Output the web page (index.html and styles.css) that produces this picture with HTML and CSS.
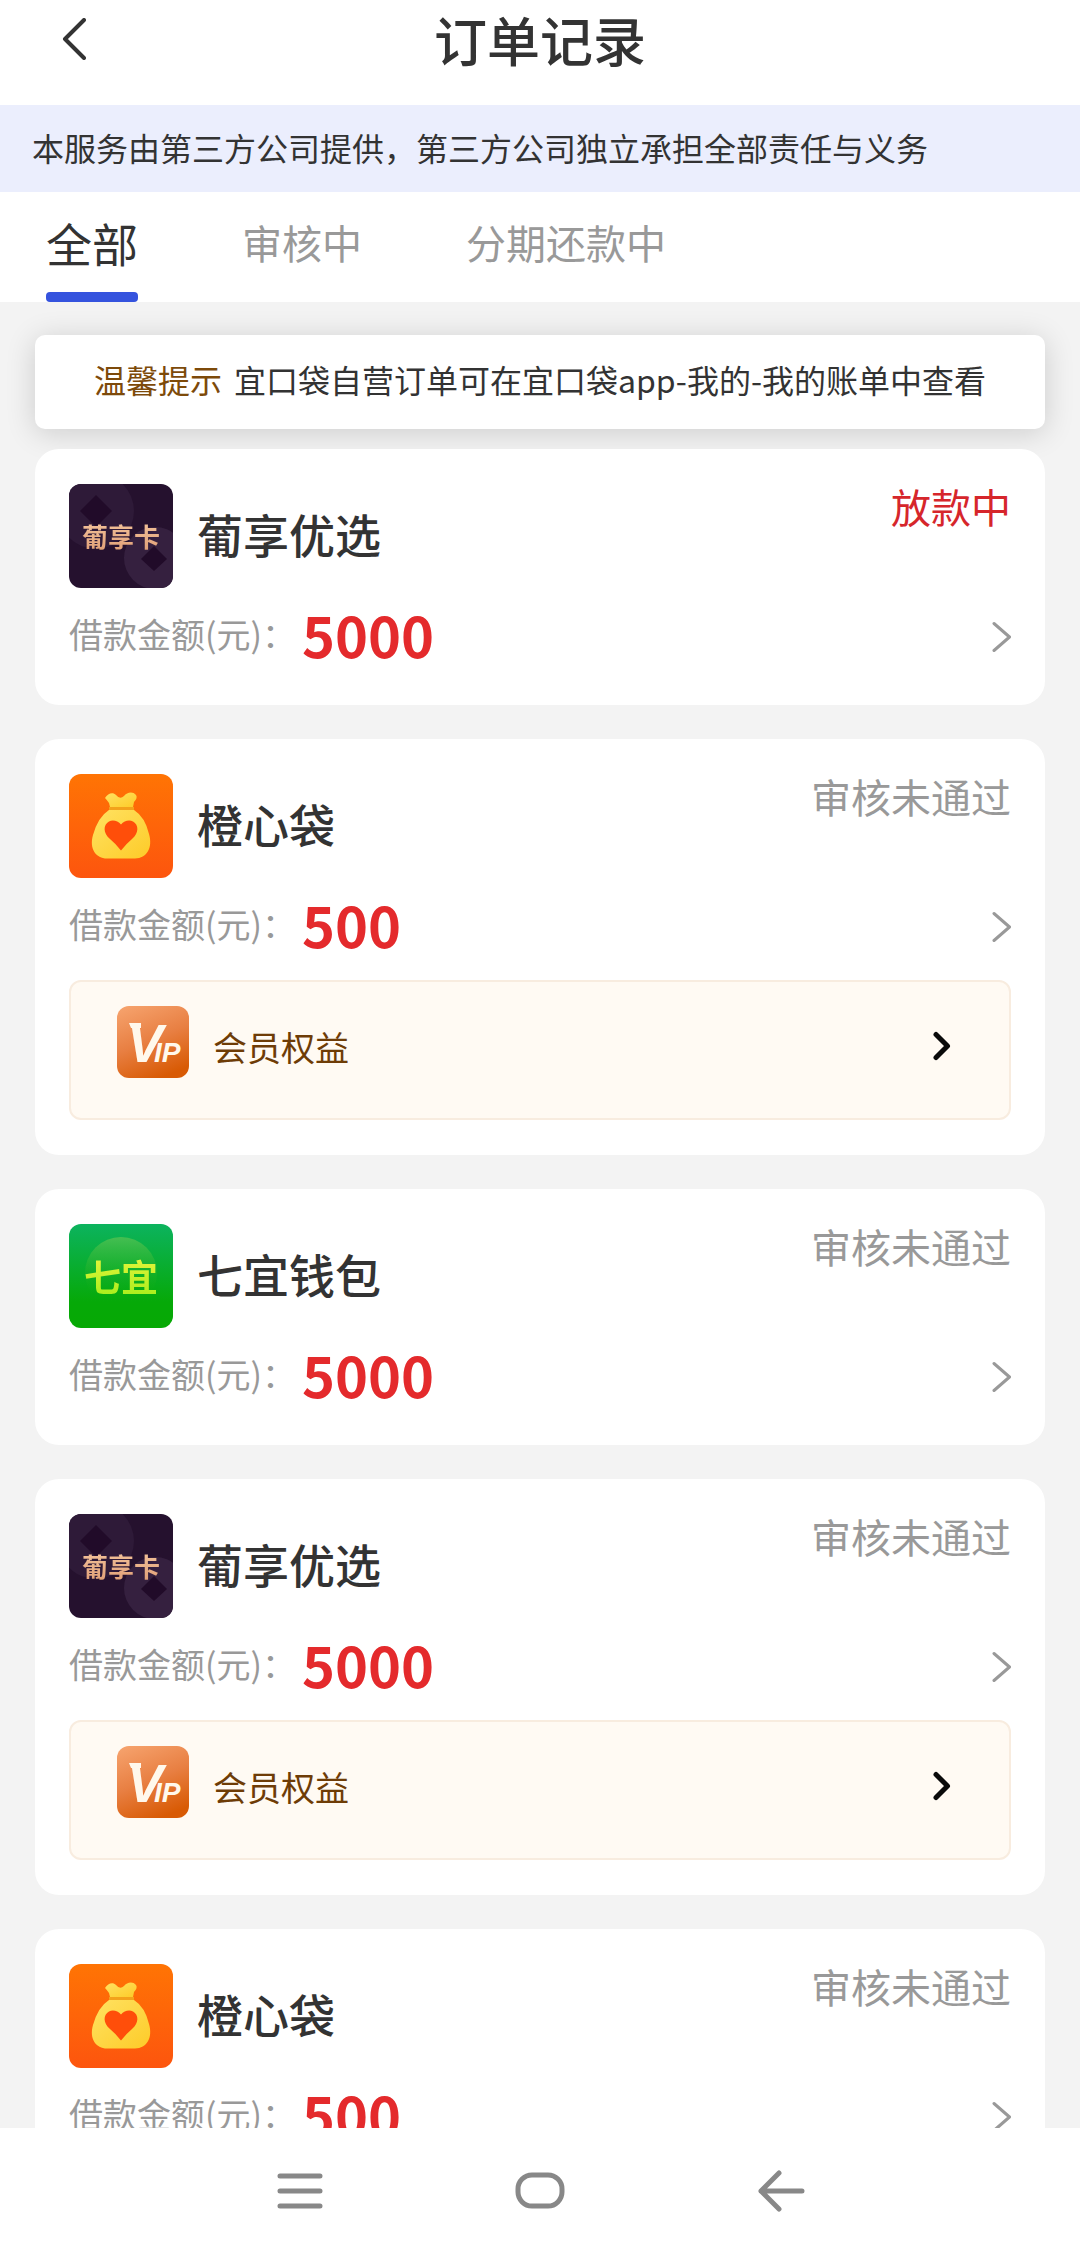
FILE: index.html
```html
<!DOCTYPE html>
<html lang="zh-CN">
<head>
<meta charset="utf-8">
<meta name="viewport" content="width=device-width, initial-scale=1">
<title>订单记录</title>
<link rel="stylesheet" href="styles.css">
</head>
<body>
<svg class="sprite" aria-hidden="true">
  <defs>
    <linearGradient id="orange" x1="0" y1="0" x2="0" y2="1">
      <stop offset="0" stop-color="#ff7404"/><stop offset="1" stop-color="#fd550e"/>
    </linearGradient>
    <linearGradient id="bag" x1="0" y1="0" x2="1" y2="1">
      <stop offset="0" stop-color="#ffe262"/><stop offset="1" stop-color="#fdcb28"/>
    </linearGradient>
    <linearGradient id="green" x1="0" y1="0" x2="0" y2="1">
      <stop offset="0" stop-color="#0cb35e"/><stop offset="0.75" stop-color="#06a908"/><stop offset="1" stop-color="#06a904"/>
    </linearGradient>
    <linearGradient id="halo" x1="0" y1="0" x2="0" y2="1">
      <stop offset="0" stop-color="#4cc052" stop-opacity="0.9"/><stop offset="0.8" stop-color="#16ad10" stop-opacity="0"/>
    </linearGradient>
    <linearGradient id="copper" x1="0.2" y1="0" x2="0.6" y2="1">
      <stop offset="0" stop-color="#f5a06a"/><stop offset="0.5" stop-color="#e87f42"/><stop offset="1" stop-color="#d85a04"/>
    </linearGradient>
    <clipPath id="tile"><rect width="104" height="104" rx="12"/></clipPath>
  </defs>
  <symbol id="logo-grape" viewBox="0 0 104 104">
    <g clip-path="url(#tile)">
      <rect width="104" height="104" fill="#25112e"/>
      <circle cx="27" cy="27" r="38" fill="#2e1a38"/>
      <path d="M27 11l16 16-16 16-16-16z" fill="#210b29"/>
      <circle cx="86" cy="74" r="31" fill="#35203f"/>
      <path d="M85 62l13 13-13 12-13-12z" fill="#210b29"/>
    </g>
  </symbol>
  <symbol id="logo-bag" viewBox="0 0 104 104">
    <rect width="104" height="104" rx="12" fill="url(#orange)"/>
    <path d="M36 24C39 19 44 18 47 21Q51 26 55 22C58 18 64 17 67 21Q69 24 65 28L64 33H41L40 29Q38 26 36 24z" fill="url(#bag)"/>
    <path d="M40 33h25v3H40z" fill="#f3a21b"/>
    <path d="M40 36H65Q76 43 80 60C84 74 78 84 66 84.500H38C27 84.500 20 75 24 61Q29 43 40 36z" fill="url(#bag)"/>
    <path d="M52 76.500Q47 70 41 65C34 59 34 51 40 47.500 44 45.500 49 47 52 50.500 55 47 60 45.500 64 47.500 70 51 70 59 63 65Q57 70 52 76.500z" fill="#ff4e0a"/>
  </symbol>
  <symbol id="logo-green" viewBox="0 0 104 104">
    <rect width="104" height="104" rx="12" fill="url(#green)"/>
    <circle cx="52" cy="49" r="36" fill="url(#halo)"/>
  </symbol>
  <symbol id="chevron" viewBox="0 0 20 32">
    <path d="M3 2.500L18.500 16 3 29.500" fill="none" stroke="#999" stroke-width="3" stroke-linecap="round" stroke-linejoin="round"/>
  </symbol>
  <symbol id="chevron-bold" viewBox="0 0 18 64">
    <path d="M3 20.500L14.500 32 3 43.500" fill="none" stroke="#0a0a0a" stroke-width="5" stroke-linecap="round" stroke-linejoin="round"/>
  </symbol>
</svg>

<header class="header">
  <button class="back" type="button" aria-label="返回">
    <svg width="24" height="42" viewBox="0 0 24 42"><path d="M22 2L3 21l19 19" fill="none" stroke="#333" stroke-width="4" stroke-linecap="round" stroke-linejoin="round"/></svg>
  </button>
  <h1 class="title">订单记录</h1>
</header>

<p class="notice">本服务由第三方公司提供，第三方公司独立承担全部责任与义务</p>

<nav class="tabs">
  <a class="tab tab-active" href="#all">全部</a>
  <a class="tab" href="#review">审核中</a>
  <a class="tab" href="#repay">分期还款中</a>
</nav>

<main class="content">
  <p class="tip"><span class="tip-tag">温馨提示</span><span>宜口袋自营订单可在宜口袋app-我的-我的账单中查看</span></p>

  <div class="orders">
    <article class="order">
      <div class="order-head">
        <div class="logo"><svg><use href="#logo-grape"/></svg><span class="logo-text logo-text-gold">葡享卡</span></div>
        <h2 class="name">葡享优选</h2>
        <span class="status status-live">放款中</span>
      </div>
      <a class="amount-row" href="#order-1">
        <span class="label">借款金额(元)：</span><strong class="amount">5000</strong>
        <svg class="chevron"><use href="#chevron"/></svg>
      </a>
    </article>

    <article class="order">
      <div class="order-head">
        <div class="logo"><svg><use href="#logo-bag"/></svg></div>
        <h2 class="name">橙心袋</h2>
        <span class="status">审核未通过</span>
      </div>
      <a class="amount-row" href="#order-2">
        <span class="label">借款金额(元)：</span><strong class="amount">500</strong>
        <svg class="chevron"><use href="#chevron"/></svg>
      </a>
      <a class="vip" href="#vip-2">
        <svg class="vip-logo" viewBox="0 0 72 72">
          <rect width="72" height="72" rx="12" fill="url(#copper)"/>
          <path d="M12 17h12v5H14z" fill="#fff8ec"/>
          <text class="vip-mark" x="10" y="56">V<tspan class="vip-mark-small" dx="-9">IP</tspan></text>
        </svg>
        <span class="vip-label">会员权益</span>
        <svg class="vip-chevron"><use href="#chevron-bold"/></svg>
      </a>
    </article>

    <article class="order">
      <div class="order-head">
        <div class="logo"><svg><use href="#logo-green"/></svg><span class="logo-text logo-text-lime">七宜</span></div>
        <h2 class="name">七宜钱包</h2>
        <span class="status">审核未通过</span>
      </div>
      <a class="amount-row" href="#order-3">
        <span class="label">借款金额(元)：</span><strong class="amount">5000</strong>
        <svg class="chevron"><use href="#chevron"/></svg>
      </a>
    </article>

    <article class="order">
      <div class="order-head">
        <div class="logo"><svg><use href="#logo-grape"/></svg><span class="logo-text logo-text-gold">葡享卡</span></div>
        <h2 class="name">葡享优选</h2>
        <span class="status">审核未通过</span>
      </div>
      <a class="amount-row" href="#order-4">
        <span class="label">借款金额(元)：</span><strong class="amount">5000</strong>
        <svg class="chevron"><use href="#chevron"/></svg>
      </a>
      <a class="vip" href="#vip-4">
        <svg class="vip-logo" viewBox="0 0 72 72">
          <rect width="72" height="72" rx="12" fill="url(#copper)"/>
          <path d="M12 17h12v5H14z" fill="#fff8ec"/>
          <text class="vip-mark" x="10" y="56">V<tspan class="vip-mark-small" dx="-9">IP</tspan></text>
        </svg>
        <span class="vip-label">会员权益</span>
        <svg class="vip-chevron"><use href="#chevron-bold"/></svg>
      </a>
    </article>

    <article class="order">
      <div class="order-head">
        <div class="logo"><svg><use href="#logo-bag"/></svg></div>
        <h2 class="name">橙心袋</h2>
        <span class="status">审核未通过</span>
      </div>
      <a class="amount-row" href="#order-5">
        <span class="label">借款金额(元)：</span><strong class="amount">500</strong>
        <svg class="chevron"><use href="#chevron"/></svg>
      </a>
    </article>
  </div>
</main>

<footer class="system-nav">
  <button type="button" aria-label="最近任务">
    <svg width="60" height="48" viewBox="0 0 60 48"><path d="M10 9h40M10 24h40M10 39h40" fill="none" stroke="#888" stroke-width="5" stroke-linecap="round"/></svg>
  </button>
  <button type="button" aria-label="主屏幕">
    <svg width="60" height="48" viewBox="0 0 60 48"><rect x="8" y="8" width="44" height="31" rx="14" fill="none" stroke="#888" stroke-width="5"/></svg>
  </button>
  <button type="button" aria-label="返回上一页">
    <svg width="60" height="48" viewBox="0 0 60 48"><path d="M29 6L11 24l18 18M11 24h41" fill="none" stroke="#888" stroke-width="5" stroke-linecap="round" stroke-linejoin="round"/></svg>
  </button>
</footer>
</body>
</html>
```
FILE: styles.css
```css
* {
  box-sizing: border-box;
}

body {
  display: flex;
  flex-direction: column;
  height: 100vh;
  margin: 0;
  background: #fff;
  color: #333;
  font-family: "Noto Sans CJK SC", "Noto Sans", sans-serif;
}

h1,
h2,
p {
  margin: 0;
}

a {
  color: inherit;
  text-decoration: none;
}

button {
  display: flex;
  padding: 0;
  border: 0;
  background: none;
}

.sprite {
  position: absolute;
  width: 0;
  height: 0;
}

.header {
  display: grid;
  grid-template-columns: 1fr auto 1fr;
  align-items: center;
  flex: none;
  padding: 0 62px 27px;
}

.title {
  font-size: 53px;
  font-weight: 500;
  line-height: 78px;
}

.notice {
  flex: none;
  padding: 0 32px 2px;
  background: #ebeefd;
  font-size: 32px;
  line-height: 85px;
  white-space: nowrap;
}

.tabs {
  display: flex;
  gap: 104px;
  flex: none;
  padding: 0 46px;
}

.tab {
  border-bottom: 10px solid transparent;
  color: #999;
  font-size: 40px;
  line-height: 100px;
}

.tab-active {
  position: relative;
  color: #333;
  font-size: 46px;
}

.tab-active::after {
  content: "";
  position: absolute;
  right: 0;
  bottom: -10px;
  left: 0;
  height: 10px;
  border-radius: 4px;
  background: #3553de;
}

.content {
  flex: 1;
  min-height: 0;
  overflow-y: auto;
  padding: 33px 35px 0;
  background: #f3f3f3;
  scrollbar-width: none;
}

.tip {
  display: flex;
  justify-content: center;
  gap: 12px;
  margin-bottom: 20px;
  padding-bottom: 6px;
  border-radius: 10px;
  background: #fff;
  box-shadow: 0 4px 30px rgba(0, 0, 0, 0.16);
  font-size: 32px;
  line-height: 88px;
  white-space: nowrap;
}

.tip-tag {
  color: #7d4a0a;
}

.orders {
  display: flex;
  flex-direction: column;
  gap: 34px;
  position: relative;
}

.order {
  padding: 35px 34px;
  border-radius: 24px;
  background: #fff;
}

.order-head {
  display: flex;
  align-items: center;
  gap: 24px;
}

.logo {
  display: grid;
  place-items: center;
  flex: none;
  width: 104px;
  height: 104px;
}

.logo > * {
  grid-area: 1 / 1;
}

.logo svg {
  width: 104px;
  height: 104px;
}

.logo-text {
  z-index: 1;
  background-clip: text;
  color: transparent;
  font-weight: 700;
  line-height: 40px;
}

.logo-text-gold {
  background-image: linear-gradient(#f6c9a0, #dd9a72);
  font-size: 26px;
}

.logo-text-lime {
  background-image: linear-gradient(#e8f43c, #a8ee1c);
  font-size: 37px;
}

.name {
  flex: 1;
  padding-bottom: 6px;
  font-size: 46px;
  font-weight: 500;
  line-height: 60px;
}

.status {
  align-self: flex-start;
  color: #999;
  font-size: 40px;
  line-height: 44px;
}

.status-live {
  color: #d6262b;
}

.amount-row {
  display: flex;
  align-items: center;
  gap: 6px;
  margin-top: 16px;
  line-height: 60px;
}

.label {
  padding-bottom: 6px;
  color: #999;
  font-size: 34px;
}

.amount {
  padding-bottom: 6px;
  color: #e42a2c;
  font-size: 56px;
  font-weight: 700;
}

.chevron {
  width: 20px;
  height: 32px;
  margin-left: auto;
}

.vip {
  display: flex;
  align-items: flex-end;
  gap: 24px;
  margin-top: 20px;
  padding: 24px 58px 40px 46px;
  border: 2px solid #f8ecdf;
  border-radius: 12px;
  background: #fffaf3;
}

.vip-logo {
  width: 72px;
  height: 72px;
}

.vip-mark {
  fill: #fff8ec;
  font-family: "Liberation Sans", sans-serif;
  font-size: 54px;
  font-style: italic;
  font-weight: 700;
}

.vip-mark-small {
  font-size: 28px;
}

.vip-label {
  color: #6e3c06;
  font-size: 34px;
  line-height: 62px;
}

.vip-chevron {
  width: 18px;
  height: 64px;
  margin-left: auto;
}

.system-nav {
  display: flex;
  justify-content: center;
  align-items: center;
  gap: 180px;
  flex: none;
  height: 125px;
  background: #fff;
}
```
